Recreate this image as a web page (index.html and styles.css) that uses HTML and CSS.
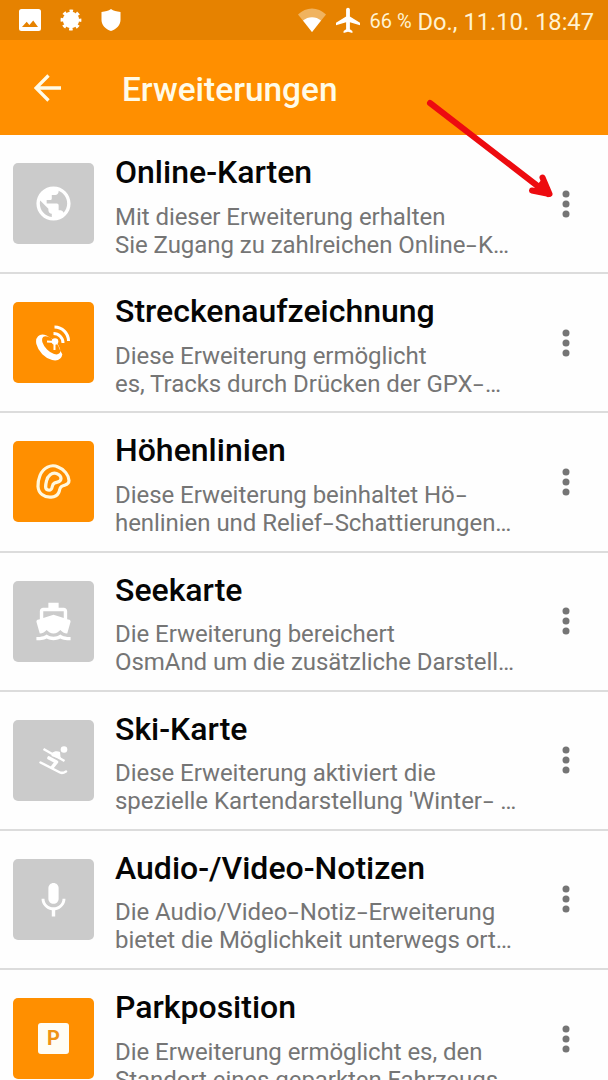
FILE: index.html
```html
<!DOCTYPE html>
<html lang="de">
<head>
<meta charset="utf-8">
<title>Erweiterungen</title>
<link rel="stylesheet" href="styles.css">
</head>
<body>
<div class="screen">
  <header class="status">
    <div class="status-left">
      <svg class="ic-photo" viewBox="0 0 22 22"><path fill="#fff" fill-rule="evenodd" d="M2.500 0h17a2.500 2.500 0 0 1 2.500 2.500v17a2.500 2.500 0 0 1-2.500 2.500h-17a2.500 2.500 0 0 1-2.500-2.500v-17a2.500 2.500 0 0 1 2.500-2.500zM3 18h16l-4.800-6.500-3.800 4.400-2.700-3.200z"/></svg>
      <svg class="ic-gear" viewBox="-11 -11 22 22"><circle r="8.200" fill="#fff"/><circle r="8.600" fill="none" stroke="#fff" stroke-width="3.600" stroke-dasharray="3.400 3.354" stroke-dashoffset="1.700"/></svg>
      <svg class="ic-shield" viewBox="0 0 20 22"><path fill="#fff" d="M10 0c2.500 1.800 5.500 2.500 9.500 3v8c0 5-4 9-9.500 11C4.500 20 .5 16 .5 11V3C4.500 2.500 7.500 1.800 10 0z"/></svg>
    </div>
    <div class="status-right">
      <svg class="ic-wifi" viewBox="0 0 30 25"><path fill="#f0b35f" d="M1 6.500C9-1.500 21-1.500 29 6.500L15 24z"/><path fill="#fff" d="M6 12.500c5-4.500 13-4.500 18 0L15 24z"/></svg>
      <svg class="ic-plane" viewBox="2 1.500 19 20.500"><path fill="#fff" d="M21 16v-2l-8-5V3.500c0-.83-.67-1.500-1.500-1.500S10 2.670 10 3.500V9l-8 5v2l8-2.500V19l-2 1.500V22l3.500-1 3.500 1v-1.500L13 19v-5.500l8 2.500z"/></svg>
      <span class="battery">66 %</span>
      <span class="clock">Do., 11.10. 18:47</span>
    </div>
  </header>
  <div class="toolbar">
    <svg class="back" viewBox="0 0 28 28"><path d="M27 14H2M14.500 1.500L2 14l12.500 12.500" fill="none" stroke="#fffbe8" stroke-width="3.300"/></svg>
    <h1 class="heading">Erweiterungen</h1>
  </div>
  <main class="list">
    <section class="row">
      <div class="tile"><svg class="glyph" viewBox="0 0 24 24"><path d="M12 2C6.480 2 2 6.480 2 12s4.480 10 10 10 10-4.480 10-10S17.520 2 12 2zm-1 17.930c-3.950-.49-7-3.850-7-7.930 0-.62.08-1.210.21-1.790L9 15v1c0 1.100.9 2 2 2v1.930zm6.900-2.540c-.26-.81-1-1.390-1.900-1.390h-1v-3c0-.55-.45-1-1-1H8v-2h2c.55 0 1-.45 1-1V7h2c1.100 0 2-.9 2-2v-.41c2.930 1.190 5 4.060 5 7.410 0 2.080-.8 3.970-2.100 5.390z"/></svg></div>
      <div class="info"><h2 class="name">Online-Karten</h2><p class="desc">Mit dieser Erweiterung erhalten<br>Sie Zugang zu zahlreichen Online<span class="hyphen">-</span>K…</p></div>
      <svg class="more" viewBox="0 0 8 28"><circle cx="4" cy="4" r="3.500"/><circle cx="4" cy="14" r="3.500"/><circle cx="4" cy="24" r="3.500"/></svg>
    </section>
    <section class="row">
      <div class="tile on"><svg class="glyph" viewBox="0 0 41 41"><g transform="rotate(45 16.500 25)"><path fill-rule="evenodd" d="M.8 25.500a15.700 9.700 0 1 0 31.400 0q0-2.500-1.500-4.500l-4-1q-9-5-20.400-1Q.8 21 .8 25.500zM5 22.500a11.500 6 0 1 0 23 0a11.500 5.500 0 1 0-23 0z"/></g><path d="M14 19.500l7.500 0.500M21.500 20v8" fill="none" stroke="#fff" stroke-width="2"/><circle cx="22" cy="19.500" r="3.300"/><path d="M20.500 11.500a9.500 9.500 0 0 1 9.500 9.500M21.500 5a14 14 0 0 1 14 14" fill="none" stroke="#fff" stroke-width="3"/></svg></div>
      <div class="info"><h2 class="name">Streckenaufzeichnung</h2><p class="desc">Diese Erweiterung ermöglicht<br>es, Tracks durch Drücken der GPX<span class="hyphen">-</span>…</p></div>
      <svg class="more" viewBox="0 0 8 28"><circle cx="4" cy="4" r="3.500"/><circle cx="4" cy="14" r="3.500"/><circle cx="4" cy="24" r="3.500"/></svg>
    </section>
    <section class="row">
      <div class="tile on"><svg class="glyph outline" viewBox="0 0 41 41"><path d="M25 6C18 2.500 10 7 7 14.500C4 22 4 30 9 33.500C14 37.500 23 37 25.500 32C27.500 29 25.500 28 28.500 25.500C31.500 23.500 36 24.500 36 19.500C36 14.500 31 8 25 6z"/><path d="M23.500 12.500C19 11 14.500 15 13.500 20C12.500 24 11.500 28 15 29C21 30 17.500 24 21.500 22C25 20.500 28 21.500 28 17.500C28 15 26 13.500 23.500 12.500z"/></svg></div>
      <div class="info"><h2 class="name">Höhenlinien</h2><p class="desc">Diese Erweiterung beinhaltet Hö<span class="hyphen">-</span><br>henlinien und Relief<span class="hyphen">-</span>Schattierungen…</p></div>
      <svg class="more" viewBox="0 0 8 28"><circle cx="4" cy="4" r="3.500"/><circle cx="4" cy="14" r="3.500"/><circle cx="4" cy="24" r="3.500"/></svg>
    </section>
    <section class="row">
      <div class="tile"><svg class="glyph boat" viewBox="0 0 24 24"><path d="M20 21c-1.390 0-2.780-.47-4-1.320-2.440 1.710-5.560 1.710-8 0C6.780 20.530 5.390 21 4 21H2v2h2c1.380 0 2.740-.35 4-.99 2.520 1.290 5.480 1.290 8 0 1.260.65 2.620.99 4 .99h2v-2h-2zM3.950 19H4c1.600 0 3.020-.88 4-2 .98 1.120 2.400 2 4 2s3.020-.88 4-2c.98 1.120 2.400 2 4 2h.05l1.890-6.680c.08-.26.06-.54-.06-.78s-.34-.42-.6-.5L20 10.620V6c0-1.100-.9-2-2-2h-3V1H9v3H6c-1.100 0-2 .9-2 2v4.620l-1.290.42c-.26.08-.48.26-.6.5s-.15.52-.06.78L3.950 19zM6 6h12v3.970L12 8 6 9.970V6z"/></svg></div>
      <div class="info"><h2 class="name">Seekarte</h2><p class="desc">Die Erweiterung bereichert<br>OsmAnd um die zusätzliche Darstell…</p></div>
      <svg class="more" viewBox="0 0 8 28"><circle cx="4" cy="4" r="3.500"/><circle cx="4" cy="14" r="3.500"/><circle cx="4" cy="24" r="3.500"/></svg>
    </section>
    <section class="row">
      <div class="tile"><svg class="glyph" viewBox="0 0 41 41"><circle cx="31" cy="9.500" r="3.300"/><path d="M10.500 9L31.500 21" fill="none" stroke="#fff" stroke-width="2.500"/><path d="M19 13C21 11 24.500 10.500 27 12L27.500 17L29 19.500L24 18L18.500 16z"/><path d="M16 18L23.500 22L19.500 27" fill="none" stroke="#fff" stroke-width="3.600" stroke-linejoin="round" stroke-linecap="round"/><path d="M7.500 22.500L26 32Q29 34 33 31.500" fill="none" stroke="#fff" stroke-width="2.500" stroke-linecap="round"/></svg></div>
      <div class="info"><h2 class="name">Ski-Karte</h2><p class="desc">Diese Erweiterung aktiviert die<br>spezielle Kartendarstellung 'Winter<span class="hyphen">-</span> …</p></div>
      <svg class="more" viewBox="0 0 8 28"><circle cx="4" cy="4" r="3.500"/><circle cx="4" cy="14" r="3.500"/><circle cx="4" cy="24" r="3.500"/></svg>
    </section>
    <section class="row">
      <div class="tile"><svg class="glyph" viewBox="0 0 24 24"><path d="M12 14.500c1.660 0 3-1.340 3-3v-6.200c0-1.660-1.340-3-3-3s-3 1.340-3 3v6.200c0 1.660 1.340 3 3 3z"/><path d="M17.300 11.500c0 3-2.540 5.100-5.300 5.100s-5.300-2.100-5.300-5.100H5c0 3.410 2.720 6.230 6 6.720V22h2v-3.780c3.280-.48 6-3.300 6-6.720h-1.700z"/></svg></div>
      <div class="info"><h2 class="name">Audio-/Video-Notizen</h2><p class="desc">Die Audio/Video<span class="hyphen">-</span>Notiz<span class="hyphen">-</span>Erweiterung<br>bietet die Möglichkeit unterwegs ort…</p></div>
      <svg class="more" viewBox="0 0 8 28"><circle cx="4" cy="4" r="3.500"/><circle cx="4" cy="14" r="3.500"/><circle cx="4" cy="24" r="3.500"/></svg>
    </section>
    <section class="row">
      <div class="tile on"><span class="parking">P</span></div>
      <div class="info"><h2 class="name">Parkposition</h2><p class="desc">Die Erweiterung ermöglicht es, den<br>Standort eines geparkten Fahrzeugs</p></div>
      <svg class="more" viewBox="0 0 8 28"><circle cx="4" cy="4" r="3.500"/><circle cx="4" cy="14" r="3.500"/><circle cx="4" cy="24" r="3.500"/></svg>
    </section>
  </main>
  <svg class="pointer" viewBox="0 0 130 104"><path d="M5 6L123 97M117.500 80.500L124.500 97L107 93.500" fill="none" stroke="#ed0b10" stroke-width="6" stroke-linecap="round" stroke-linejoin="round"/><path d="M117 82L125.500 98L108 93z" fill="#ed0b10"/></svg>
</div>
</body>
</html>
```
FILE: styles.css
```css
* { box-sizing: border-box; }
body { margin: 0; background: #fff; font-family: Roboto, "Noto Sans", sans-serif; }
.screen { position: relative; width: 608px; height: 1080px; overflow: hidden; background: #fefefe; }
svg { display: block; flex: none; }

.status { height: 40px; display: flex; justify-content: space-between; background: #e68200; color: #fff3d2; padding: 0 14px 0 19px; }
.status-left { display: flex; align-items: center; gap: 19px; }
.ic-photo { width: 22px; height: 22px; }
.ic-gear { width: 22px; height: 22px; }
.ic-shield { width: 20px; height: 22px; }
.status-right { display: flex; align-items: center; white-space: nowrap; }
.ic-wifi { width: 30px; height: 25px; margin-right: 9px; }
.ic-plane { width: 24px; height: 26px; margin-right: 9px; }
.battery { font-size: 20px; margin-right: 6px; padding-top: 2px; }
.clock { font-size: 23.700px; padding-top: 3px; }

.toolbar { height: 95px; display: flex; align-items: center; padding-left: 34px; background: #ff8f00; }
.back { width: 28px; height: 28px; margin-right: 60px; }
.heading { margin: 5px 0 0; font-size: 33.400px; font-weight: 500; line-height: 40px; color: #fffbe8; }

.row { height: 139.2px; display: flex; padding: 0 38.500px 0 13px; border-bottom: 2px solid #dcdcdc; }
.tile { flex: none; width: 81px; height: 81px; margin-top: 28px; border-radius: 5px; background: #cbcbcb; display: flex; align-items: center; justify-content: center; }
.on { background: #ff8f00; }
.glyph { width: 41px; height: 41px; fill: #fff; }
.outline path { fill: none; stroke: #fff8df; stroke-width: 3.200; }
.info { flex: 1; min-width: 0; padding: 18px 0 0 21px; white-space: nowrap; }
.name { margin: 0; font-size: 32px; line-height: 38px; font-weight: 500; color: #050505; }
.desc { margin: 11.500px 0 0; font-size: 24px; line-height: 28px; letter-spacing: -0.050px; color: #757575; }
.hyphen { display: inline-block; width: 12.500px; text-align: center; letter-spacing: 0; transform: scaleX(1.600); }
.more { width: 8px; height: 28px; margin-top: 54.500px; fill: #757575; }
.parking { width: 31px; height: 31px; border-radius: 3px; background: #fffdf5; color: #ef9215; font-size: 20px; line-height: 31px; font-weight: 700; text-align: center; }

.pointer { position: absolute; left: 425px; top: 97px; width: 130px; height: 104px; }
```
